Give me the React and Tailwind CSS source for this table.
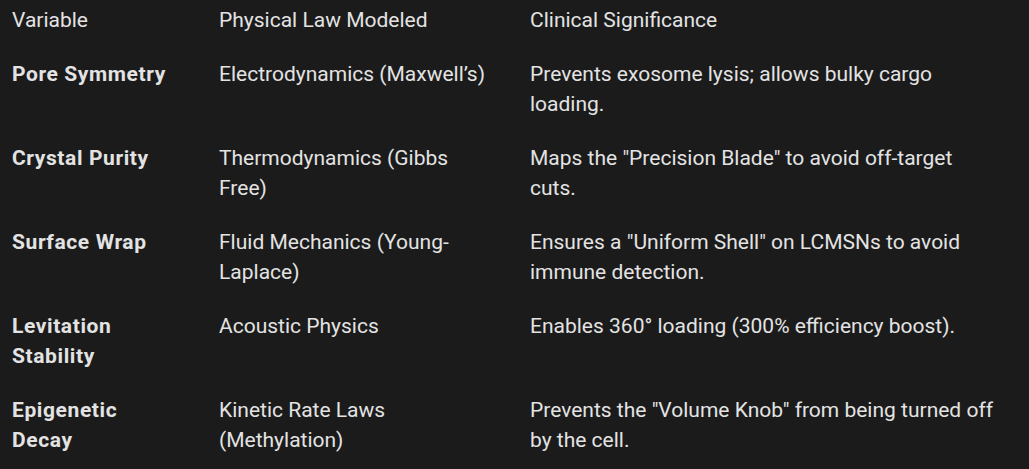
import React from "react";

const rows = [
  ["Pore Symmetry", "Electrodynamics (Maxwell’s)", "Prevents exosome lysis; allows bulky cargo loading."],
  ["Crystal Purity", "Thermodynamics (Gibbs Free)", <>Maps the "Precision Blade" to avoid off-target<br />cuts.</>],
  ["Surface Wrap", "Fluid Mechanics (Young-Laplace)", "Ensures a \"Uniform Shell\" on LCMSNs to avoid immune detection."],
  ["Levitation Stability", "Acoustic Physics", "Enables 360° loading (300% efficiency boost)."],
  ["Epigenetic Decay", "Kinetic Rate Laws (Methylation)", "Prevents the \"Volume Knob\" from being turned off by the cell."],
];

export default function App() {
  return (
    <div
      className="w-[1029px] h-[469px] overflow-hidden bg-[#1b1b1b] text-[#e3e3e3] text-[21px] leading-[30px]"
      style={{ fontFamily: "Roboto, 'Noto Sans', sans-serif" }}
    >
      <table className="w-[1029px] table-fixed border-collapse">
        <colgroup>
          <col className="w-[207px]" />
          <col className="w-[311px]" />
          <col className="w-[511px]" />
        </colgroup>
        <thead>
          <tr>
            <th className="pl-3 pr-[36px] pt-[5px] pb-3 text-left font-normal align-top">Variable</th>
            <th className="pl-3 pr-6 pt-[5px] pb-3 text-left font-normal align-top">Physical Law Modeled</th>
            <th className="pl-3 pr-[21px] pt-[5px] pb-3 text-left font-normal align-top">Clinical Significance</th>
          </tr>
        </thead>
        <tbody>
          {rows.map((r) => (
            <tr key={r[0]}>
              <td className="pl-3 pr-[30px] py-3 align-top font-bold tracking-[0.6px]">{r[0]}</td>
              <td className="pl-3 pr-6 py-3 align-top">{r[1]}</td>
              <td className="pl-3 pr-[21px] py-3 align-top">{r[2]}</td>
            </tr>
          ))}
        </tbody>
      </table>
    </div>
  );
}
